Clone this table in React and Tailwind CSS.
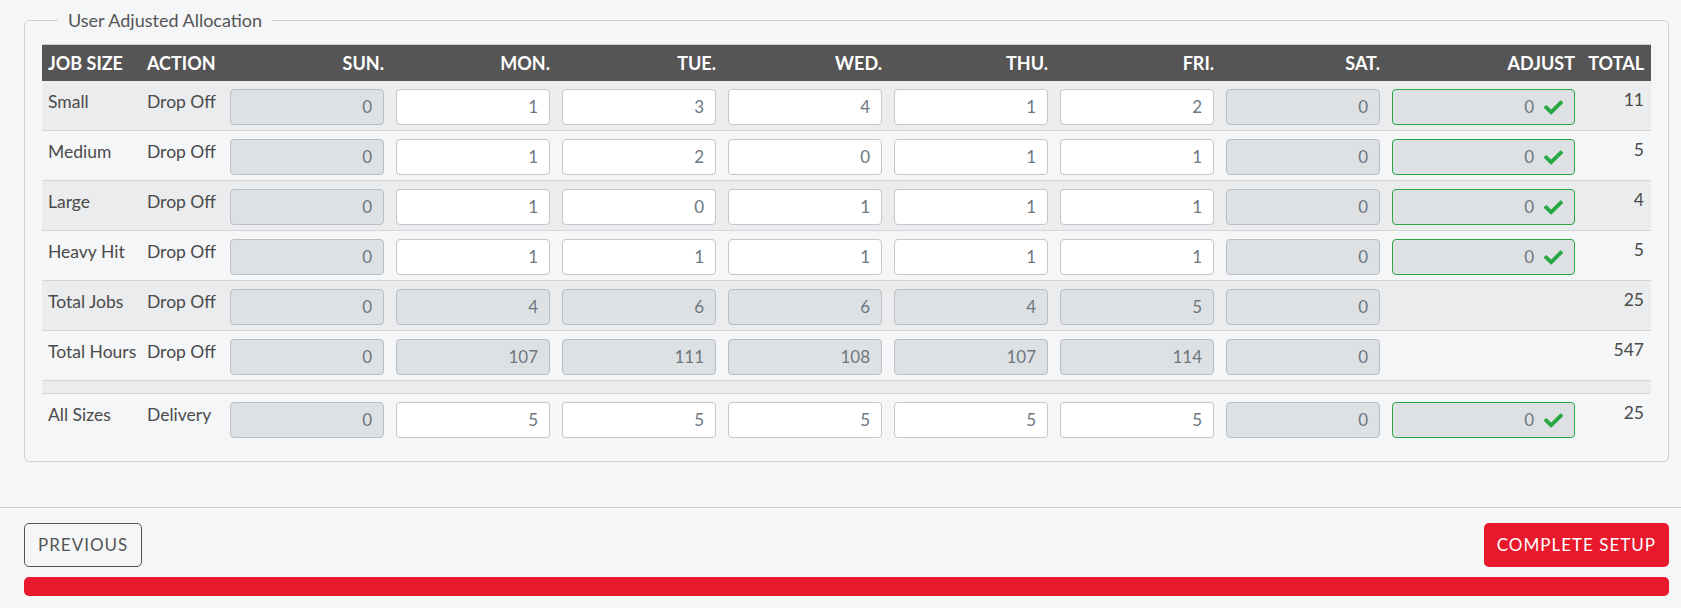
import React from "react";

const rows = [
  { size: "Small", action: "Drop Off", vals: [0, 1, 3, 4, 1, 2, 0], edit: true, adjust: true, total: 11 },
  { size: "Medium", action: "Drop Off", vals: [0, 1, 2, 0, 1, 1, 0], edit: true, adjust: true, total: 5 },
  { size: "Large", action: "Drop Off", vals: [0, 1, 0, 1, 1, 1, 0], edit: true, adjust: true, total: 4 },
  { size: "Heavy Hit", action: "Drop Off", vals: [0, 1, 1, 1, 1, 1, 0], edit: true, adjust: true, total: 5 },
  { size: "Total Jobs", action: "Drop Off", vals: [0, 4, 6, 6, 4, 5, 0], edit: false, adjust: false, total: 25 },
  { size: "Total Hours", action: "Drop Off", vals: [0, 107, 111, 108, 107, 114, 0], edit: false, adjust: false, total: 547 },
];

const delivery = { size: "All Sizes", action: "Delivery", vals: [0, 5, 5, 5, 5, 5, 0], edit: true, adjust: true, total: 25 };

const days = ["SUN.", "MON.", "TUE.", "WED.", "THU.", "FRI.", "SAT."];

const GRID = "grid grid-cols-[99px_83px_repeat(7,166px)_195px_1fr]";

function Check() {
  return (
    <svg viewBox="0 0 512 512" className="w-[19px] h-[19px]" fill="#28a745">
      <path d="M173.898 439.404l-166.4-166.4c-9.997-9.997-9.997-26.206 0-36.204l36.203-36.204c9.997-9.998 26.207-9.998 36.204 0L192 312.69 432.095 72.596c9.997-9.997 26.207-9.997 36.204 0l36.203 36.204c9.997 9.997 9.997 26.206 0 36.204l-294.4 294.401c-9.998 9.997-26.207 9.997-36.204-.001z" />
    </svg>
  );
}

function Field({ value, disabled }) {
  return (
    <div
      className={
        "h-[36px] rounded-[4px] border flex items-center justify-end pr-[11px] text-[17px] text-[#6d7780] " +
        (disabled ? "bg-[#dee1e4] border-[#bbbec2]" : "bg-white border-[#c3c6ca]")
      }
    >
      {value}
    </div>
  );
}

function Row({ r, striped, last }) {
  return (
    <div className={GRID + " " + (striped ? "bg-[#ebeced] " : "") + (last ? "" : "border-b border-[#d3d5d8]")}>
      <div className="pl-[6px] pt-[11px] leading-[20px] text-[17.5px] text-[#4a4a4a] whitespace-nowrap">{r.size}</div>
      <div className="pl-[6px] pt-[11px] leading-[20px] text-[17.5px] text-[#4a4a4a] whitespace-nowrap">{r.action}</div>
      {r.vals.map((v, i) => (
        <div key={i} className="px-[6px] pt-[8px] pb-[5px]">
          <Field value={v} disabled={!r.edit || i === 0 || i === 6} />
        </div>
      ))}
      <div className="px-[6px] pt-[8px] pb-[5px]">
        {r.adjust && (
          <div className="h-[36px] rounded-[4px] border border-[#28a745] bg-[#dee1e4] flex items-center justify-end gap-[10px] pr-[11px] text-[17px] text-[#6d7780]">
            <span>0</span>
            <Check />
          </div>
        )}
      </div>
      <div className="pr-[7px] pt-[9px] leading-[20px] text-right text-[17.5px] text-[#4a4a4a]">{r.total}</div>
    </div>
  );
}

export default function App() {
  return (
    <div className="w-full min-h-[608px] bg-[#f5f6f8] font-['Lato','Liberation_Sans',sans-serif] overflow-hidden">
      <div className="pl-[24px] pr-[12px] pt-[7px]">
        <fieldset className="border border-[#cfd2d5] rounded-[5px] px-[17px] pb-[18px] pt-[11px] m-0 min-w-0">
          <legend className="ml-[16px] px-[10px] text-[18px] leading-[26px] text-[#555555]">User Adjusted Allocation</legend>
          <div>
            <div className={GRID + " bg-[#555555] h-[37px] items-center text-white font-bold text-[18px] border-t border-[#cfcfcf]"}>
              <div className="pl-[6px] whitespace-nowrap">JOB SIZE</div>
              <div className="pl-[6px] whitespace-nowrap">ACTION</div>
              {days.map((d) => (
                <div key={d} className="pr-[6px] text-right">{d}</div>
              ))}
              <div className="pr-[6px] text-right">ADJUST</div>
              <div className="pr-[7px] text-right">TOTAL</div>
            </div>
            {rows.map((r, i) => (
              <Row key={r.size} r={r} striped={i % 2 === 0} />
            ))}
            <div className="h-[13px] bg-[#ebeced] border-b border-[#d3d5d8]" />
            <Row r={delivery} striped={false} last />
          </div>
        </fieldset>
      </div>
      <div className="mt-[45px] border-t border-[#cccccc]" />
      <div className="pl-[24px] pr-[12px] pt-[15px]">
        <div className="flex justify-between">
          <button className="h-[44px] px-[13px] rounded-[5px] border border-[#555555] text-[17px] tracking-[1px] text-[#555555] bg-transparent">
            PREVIOUS
          </button>
          <button className="h-[44px] px-[13px] rounded-[5px] bg-[#e8192c] text-[17px] tracking-[1px] text-white">
            COMPLETE SETUP
          </button>
        </div>
        <div className="mt-[10px] h-[19px] rounded-[5px] bg-[#e8192c]" />
      </div>
    </div>
  );
}
